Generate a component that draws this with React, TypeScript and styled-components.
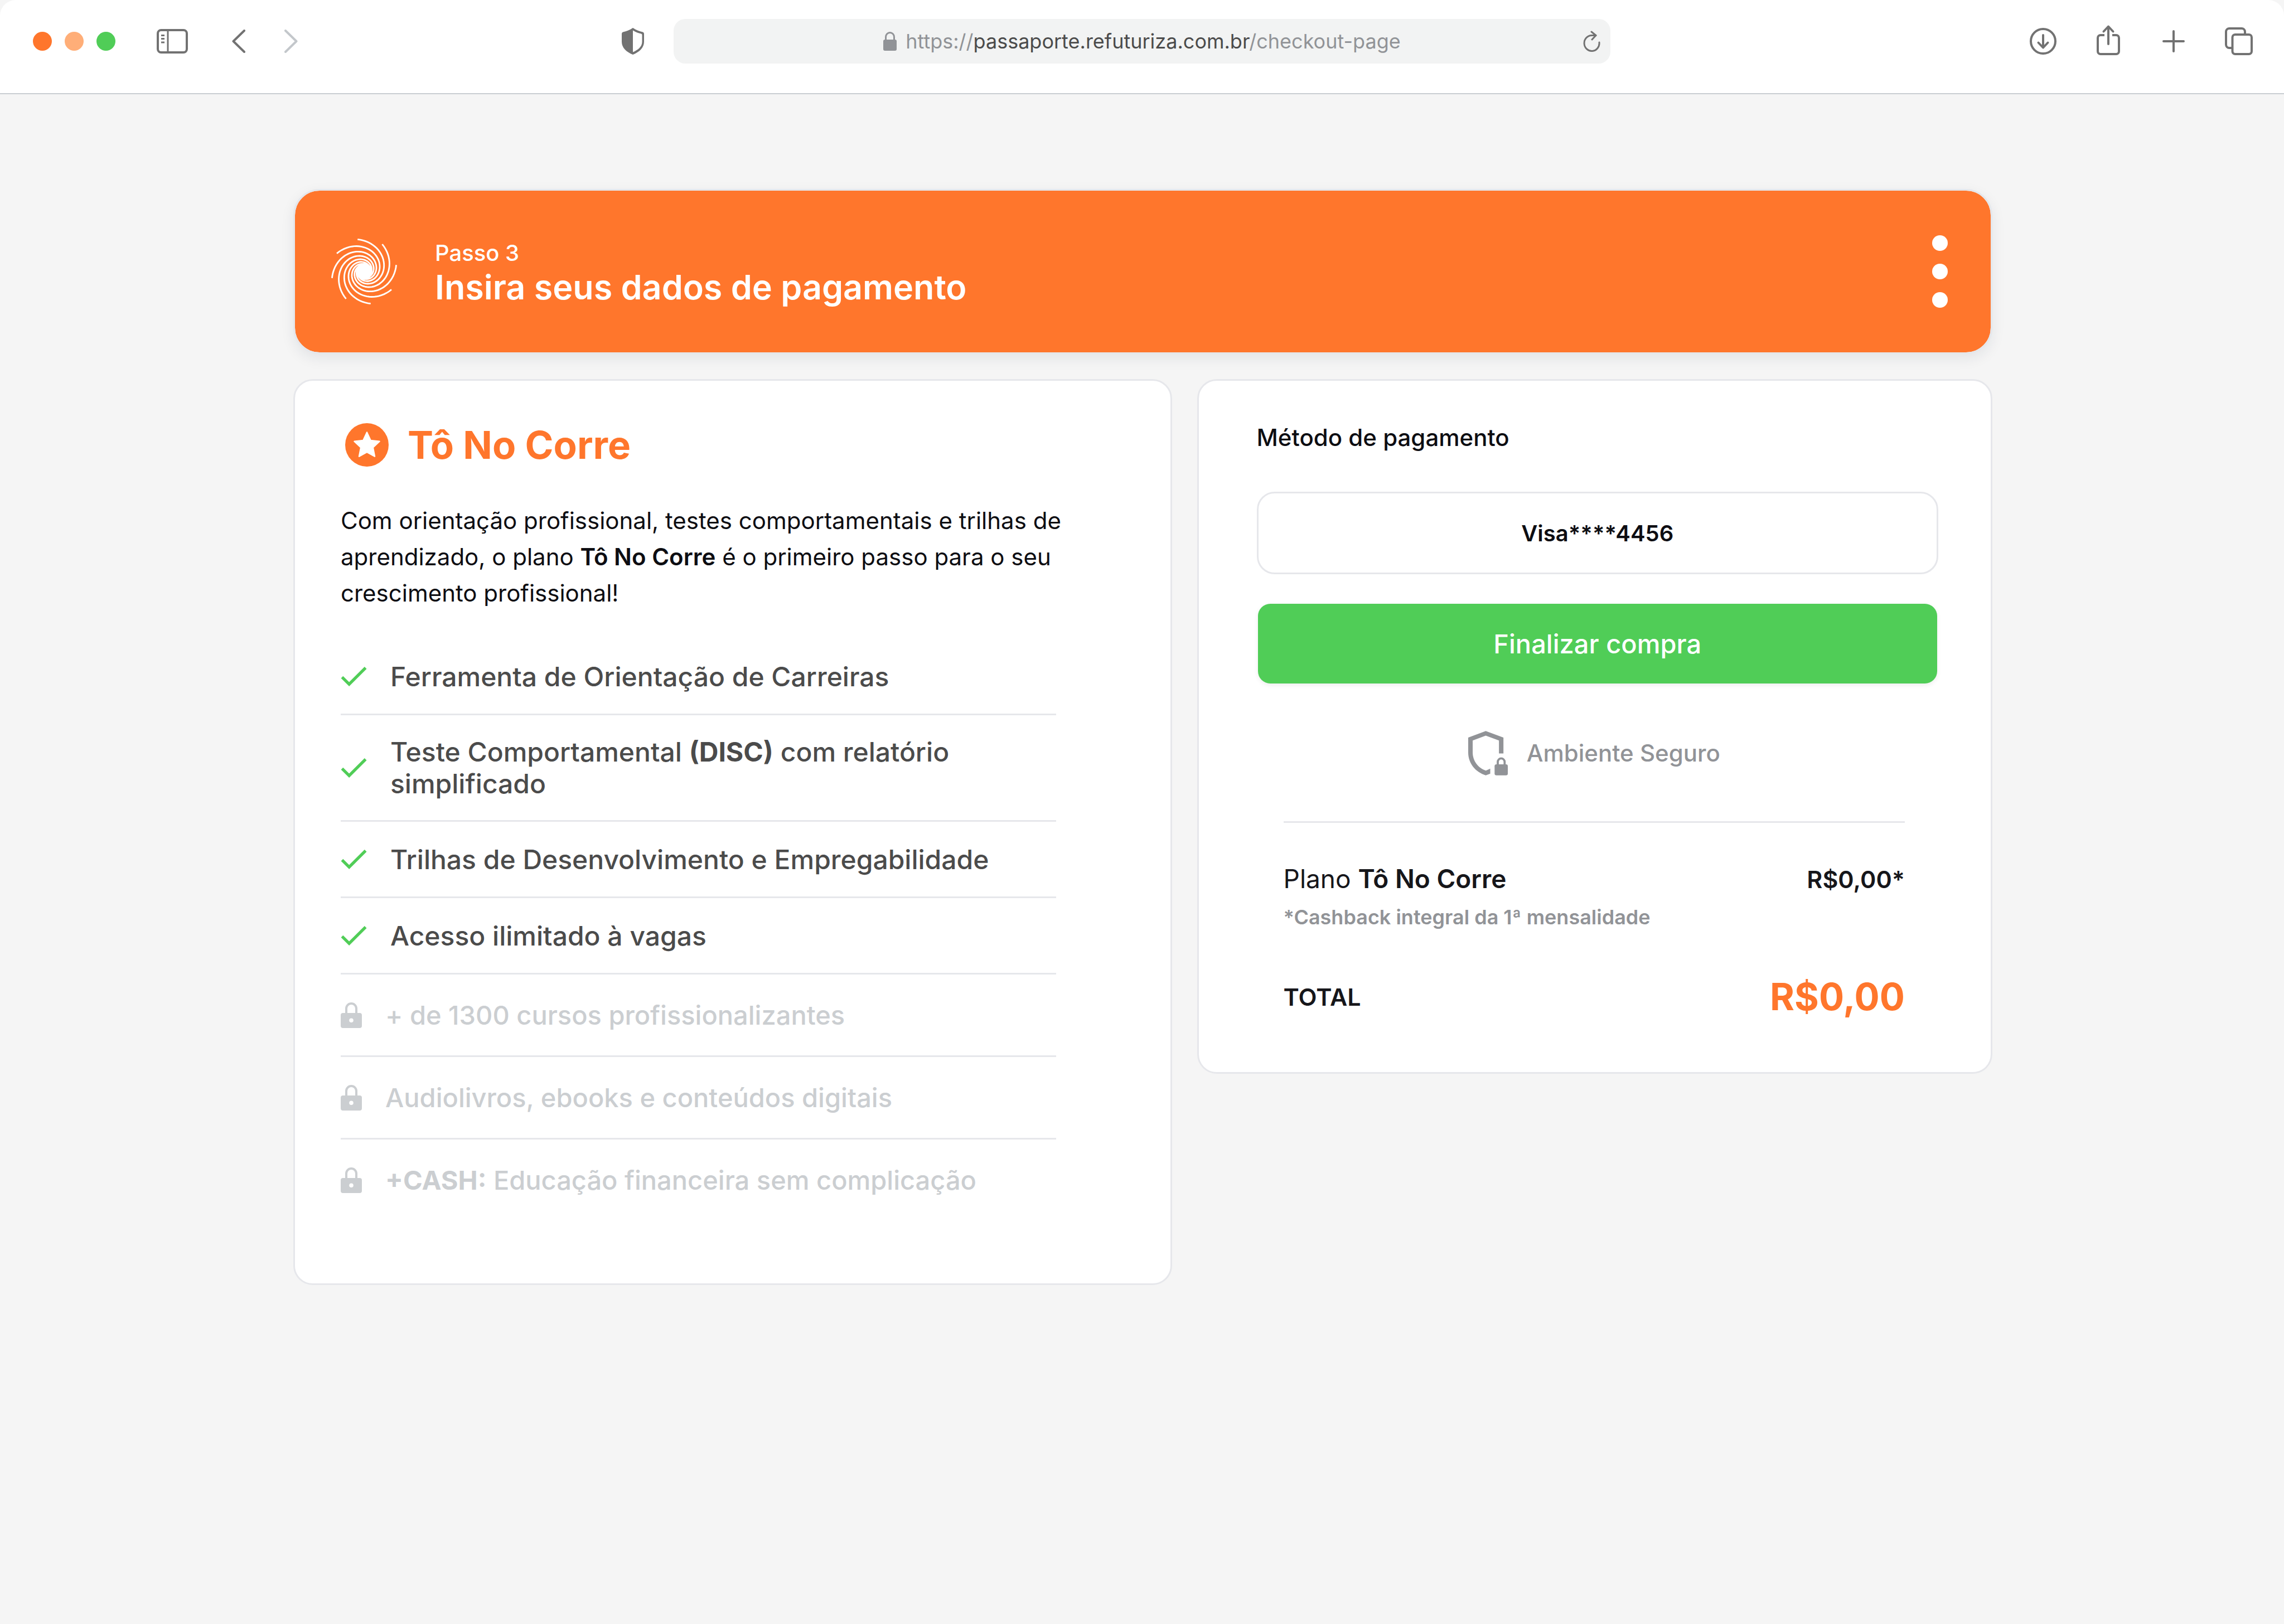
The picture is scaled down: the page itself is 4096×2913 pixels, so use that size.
import React from "react";
import styled, { createGlobalStyle } from "styled-components";

const color = {
  page: "#f5f5f5",
  surface: "#ffffff",
  line: "#e6e7eb",
  orange: "#ff762c",
  peach: "#ffae78",
  green: "#50cd57",
  ink: "#0d0d12",
  body: "#4b4b4b",
  chrome: "#727272",
  muted: "#919397",
  disabled: "#cbced1",
};

const GlobalStyle = createGlobalStyle`
  *, *::before, *::after { box-sizing: border-box; }
  html, body, #root { min-height: 100vh; }
  body {
    margin: 0;
    background: ${color.page};
    color: ${color.ink};
    font-family: Inter, "Open Sans", sans-serif;
  }
  button, input { font: inherit; }
  svg { display: block; flex: none; }
  h1, h2, p, ul, dl, dt, dd { margin: 0; padding: 0; }
`;

/* ---------- browser bar ---------- */

const Toolbar = styled.header`
  display: grid;
  grid-template-columns: minmax(0, 1fr) 41% minmax(0, 1fr);
  align-items: center;
  padding: 34px 0 53px;
  background: ${color.surface};
  border-bottom: 2px solid #c9ced2;
  border-radius: 28px 28px 0 0;
  color: ${color.chrome};
`;

const ToolbarStart = styled.div`
  display: flex;
  align-items: center;
  padding: 0 53px 0 59px;
`;

const ToolbarEnd = styled.div`
  display: flex;
  align-items: center;
  justify-content: flex-end;
  gap: 65px;
  padding-right: 55px;
`;

const WindowControls = styled.div`
  display: flex;
  gap: 23px;
  margin-right: 74px;
`;

const WindowDot = styled.button<{ $fill: string }>`
  width: 34px;
  height: 34px;
  padding: 0;
  border: 0;
  border-radius: 50%;
  background: ${(p) => p.$fill};
`;

const IconButton = styled.button`
  padding: 0;
  border: 0;
  background: none;
  color: inherit;
  &:disabled { color: #c3c7cb; }
`;

const History = styled.nav`
  display: flex;
  gap: 70px;
  margin: 0 auto 0 79px;
`;

const AddressBar = styled.div`
  height: 80px;
  display: grid;
  grid-template-columns: 1fr auto 1fr;
  align-items: center;
  padding: 0 17px;
  border-radius: 21px;
  background: #f2f3f3;
`;

const Address = styled.div`
  grid-column: 2;
  display: flex;
  align-items: center;
  gap: 16px;
  font-size: 36px;
  line-height: 48px;
  color: ${color.muted};
`;

const Host = styled.span`
  color: ${color.body};
`;

const ReloadSlot = styled.div`
  display: flex;
  justify-content: flex-end;
`;

/* ---------- page ---------- */

const Page = styled.main`
  display: flex;
  flex-direction: column;
  gap: 45px;
  padding: 170px 523px 170px 526px;
`;

const Banner = styled.section`
  display: flex;
  align-items: center;
  min-height: 296px;
  padding: 0 77px 0 65px;
  border: 3px solid #e5e7eb;
  border-radius: 47px;
  background: ${color.orange};
  background-clip: padding-box;
  color: ${color.surface};
  box-shadow: 0 8px 24px rgba(30, 40, 70, 0.08);
`;

const BannerText = styled.div`
  flex: 1;
  padding-left: 68px;
`;

const Step = styled.p`
  font-size: 40px;
  line-height: 56px;
  font-weight: 500;
`;

const BannerTitle = styled.h1`
  font-size: 61px;
  line-height: 66px;
  font-weight: 600;
`;

const MenuButton = styled(IconButton)`
  display: flex;
  flex-direction: column;
  gap: 23px;
`;

const MenuDot = styled.span`
  width: 28px;
  height: 28px;
  border-radius: 50%;
  background: ${color.surface};
`;

const Columns = styled.div`
  display: grid;
  grid-template-columns: 1575fr 1426fr;
  align-items: start;
  gap: 45px;
`;

const Card = styled.section`
  border: 3px solid ${color.line};
  border-radius: 35px;
  background: ${color.surface};
`;

const PlanCard = styled(Card)`
  padding: 76px 150px 110px 82px;
`;

const PlanHeader = styled.div`
  display: flex;
  align-items: center;
  gap: 34px;
  padding-left: 8px;
`;

const PlanName = styled.h2`
  font-size: 69px;
  line-height: 78px;
  font-weight: 700;
  color: ${color.orange};
`;

const PlanText = styled.p`
  margin-top: 64px;
  font-size: 42px;
  line-height: 65px;
`;

const Strong = styled.strong`
  font-weight: 600;
`;

const Heavy = styled.strong`
  font-weight: 700;
`;

const Features = styled.ul`
  margin: 50px 55px 0 0;
  list-style: none;
`;

const Feature = styled.li<{ $locked?: boolean }>`
  display: flex;
  align-items: center;
  gap: 42px;
  min-height: ${(p) => (p.$locked ? 148 : 137)}px;
  padding: 37px 0;
  border-bottom: 3px solid ${color.line};
  font-size: ${(p) => (p.$locked ? 47 : 48)}px;
  line-height: 57px;
  font-weight: 500;
  color: ${(p) => (p.$locked ? color.disabled : color.body)};
  &:last-child { border-bottom-color: transparent; }
`;

const PaymentCard = styled(Card)`
  padding: 72px 94px 95px 104px;
`;

const FieldLabel = styled.label`
  display: block;
  font-size: 42px;
  line-height: 60px;
  font-weight: 500;
`;

const CardField = styled.input`
  display: block;
  width: 100%;
  height: 148px;
  margin-top: 67px;
  border: 3px solid ${color.line};
  border-radius: 32px;
  background: ${color.surface};
  color: inherit;
  font-size: 40px;
  font-weight: 600;
  text-align: center;
`;

const SubmitSlot = styled.div`
  display: flex;
  padding: 53px 2px 0;
`;

const SubmitButton = styled.button`
  flex: 1;
  height: 143px;
  border: 0;
  border-radius: 22px;
  background: ${color.green};
  color: ${color.surface};
  font-size: 47px;
  font-weight: 500;
  box-shadow: 0 3px 8px rgba(0, 0, 0, 0.07);
`;

const Secure = styled.p`
  display: flex;
  align-items: center;
  justify-content: center;
  gap: 34px;
  margin-top: 85px;
  padding-right: 12px;
  font-size: 42px;
  line-height: 80px;
  font-weight: 500;
  color: ${color.muted};
`;

const Summary = styled.dl`
  margin: 82px 60px 0 48px;
  padding-top: 70px;
  border-top: 3px solid ${color.line};
  color: #16161a;
`;

const SummaryRow = styled.div`
  display: flex;
  justify-content: space-between;
  align-items: baseline;
  line-height: 60px;
`;

const PlanTerm = styled.dt`
  font-size: 46px;
`;

const Price = styled.dd`
  font-size: 43px;
  font-weight: 600;
`;

const Note = styled.p`
  margin-top: 13px;
  font-size: 36px;
  line-height: 50px;
  font-weight: 600;
  color: ${color.muted};
`;

const TotalRow = styled.div`
  display: flex;
  justify-content: space-between;
  align-items: center;
  margin-top: 78px;
  line-height: 80px;
`;

const TotalTerm = styled.dt`
  font-size: 43px;
  font-weight: 600;
`;

const TotalPrice = styled.dd`
  font-size: 67px;
  font-weight: 700;
  color: ${color.orange};
`;

/* ---------- drawings ---------- */

const stroke = {
  fill: "none",
  stroke: "currentColor",
  strokeWidth: 4,
  strokeLinecap: "round" as const,
  strokeLinejoin: "round" as const,
};

const SidebarIcon = () => (
  <svg width="56" height="44" viewBox="0 0 56 44" {...stroke}>
    <rect x="2" y="2" width="52" height="40" rx="6" />
    <path d="M20 2V42" strokeWidth="3" />
    <path d="M8 11.5H14M8 17.5H14M8 24H14" strokeWidth="3" strokeLinecap="butt" />
  </svg>
);

const BackIcon = () => (
  <svg width="24" height="42" viewBox="0 0 24 42" {...stroke}>
    <path d="M22 2 2.500 21 22 40" />
  </svg>
);

const ForwardIcon = () => (
  <svg width="24" height="42" viewBox="0 0 24 42" {...stroke}>
    <path d="M2 2 21.500 21 2 40" />
  </svg>
);

const PrivacyIcon = () => (
  <svg width="40" height="48" viewBox="0 0 40 48" fill="currentColor">
    <path
      fillRule="evenodd"
      d="M20 0C26 4 32 6.500 37 7.200Q40 7.700 40 11V25C40 36 31 43.500 20 48C9 43.500 0 36 0 25V11Q0 7.700 3 7.200C8 6.500 14 4 20 0ZM20 4.500V43.500C29.500 39.500 36.500 33.500 36.500 25V12.500Q36.500 10.800 34.800 10.500C29.500 9.500 24.500 7.500 20 4.500Z"
    />
  </svg>
);

const AddressLock = () => (
  <svg width="24" height="34" viewBox="0 0 24 34">
    <rect y="14" width="24" height="20" rx="3" fill="currentColor" />
    <path d="M4.500 15V9.500a7.500 8 0 0 1 15 0V15" fill="none" stroke="currentColor" strokeWidth="3" />
  </svg>
);

const ReloadIcon = () => (
  <svg width="32" height="38" viewBox="0 0 32 38" {...stroke} strokeWidth="3">
    <path d="M29 21A13.500 14 0 1 1 15.500 8.500H23" />
    <path d="M15 2 23 8.500 16 16" />
  </svg>
);

const DownloadIcon = () => (
  <svg width="52" height="60" viewBox="0 0 52 60" {...stroke}>
    <circle cx="26" cy="30" r="22" />
    <path d="M26 19V41M17.500 32.500 26 41.500 34.500 32.500" />
  </svg>
);

const ShareIcon = () => (
  <svg width="52" height="60" viewBox="0 0 52 60" {...stroke}>
    <path strokeLinecap="butt" d="M19 19H12a5 5 0 0 0-5 5V48a5 5 0 0 0 5 5H40a5 5 0 0 0 5-5V24a5 5 0 0 0-5-5H33" />
    <path d="M26 4V35M17.500 12.500 26 3.500 34.500 12.500" />
  </svg>
);

const PlusIcon = () => (
  <svg width="52" height="60" viewBox="0 0 52 60" {...stroke}>
    <path d="M26 12V48M8 30H44" />
  </svg>
);

const TabsIcon = () => (
  <svg width="52" height="60" viewBox="0 0 52 60" {...stroke}>
    <path strokeLinecap="butt" d="M14.500 42H9a6 6 0 0 1-6-6V13a6 6 0 0 1 6-6H31a6 6 0 0 1 6 6V18" />
    <rect x="14.500" y="18" width="34.500" height="35" rx="5" />
  </svg>
);

/* One arm of the brand mark: a logarithmic spiral winding in towards the centre. */
const spiralArm = (startDeg: number) => {
  const points: string[] = [];
  for (let turn = 0; turn <= 280; turn += 5) {
    const r = 82.7 * Math.exp((-0.308 * turn * Math.PI) / 180);
    const a = ((startDeg + turn) * Math.PI) / 180;
    points.push(`${(r * Math.cos(a)).toFixed(2)} ${(r * Math.sin(a)).toFixed(2)}`);
  }
  return `M${points.join("L")}`;
};

const BrandMark = () => (
  <svg width="118" height="118" viewBox="-83 -83 166 166" fill="none" stroke="currentColor" strokeWidth="4">
    {[0, 1, 2, 3, 4, 5, 6, 7].map((i) => (
      <path key={i} d={spiralArm(-101.5 + i * 45)} />
    ))}
    <circle r="21" fill="currentColor" stroke="none" />
  </svg>
);

const StarBadge = () => (
  <svg width="78" height="78" viewBox="0 0 100 100">
    <circle cx="50" cy="50" r="50" fill={color.orange} />
    <path
      d="M50 21 58.500 39.500 79 42 64 56 68 76.500 50 66.500 32 76.500 36 56 21 42 41.500 39.500Z"
      fill="#fff"
      stroke="#fff"
      strokeWidth="3"
      strokeLinejoin="round"
    />
  </svg>
);

const CheckIcon = () => (
  <svg width="47" height="35" viewBox="3.400 5.600 17.600 13.400" fill={color.green}>
    <path d="M9 16.170 4.830 12l-1.420 1.410L9 19 21 7l-1.410-1.410z" />
  </svg>
);

const LockIcon = () => (
  <svg width="38" height="46" viewBox="0 0 38 46">
    <path
      fill="currentColor"
      fillRule="evenodd"
      d="M4 19H34a4 4 0 0 1 4 4V42a4 4 0 0 1-4 4H4a4 4 0 0 1-4-4V23a4 4 0 0 1 4-4ZM19 28.500a3.800 3.800 0 1 0 0 7.600a3.800 3.800 0 1 0 0-7.600Z"
    />
    <path d="M10 20V11a9 9 0 0 1 18 0V20" fill="none" stroke="currentColor" strokeWidth="4" />
  </svg>
);

const SecureIcon = () => (
  <svg width="71" height="80" viewBox="42 42 300 336" fill="currentColor">
    <path d="M175 42 309 92V212H275V114L175 77 76 114V205C76 270 120 325 176 342L209 327V365L175 378C100 355 42 290 42 205V92Z" />
    <rect x="242" y="294" width="100" height="84" rx="14" />
    <path d="M266 296V276a26 26 0 0 1 52 0V296" fill="none" stroke="currentColor" strokeWidth="16" />
  </svg>
);

/* ---------- content ---------- */

const features: { text: React.ReactNode; locked?: boolean }[] = [
  { text: "Ferramenta de Orientação de Carreiras" },
  { text: <>Teste Comportamental <Heavy>(DISC)</Heavy> com relatório simplificado</> },
  { text: "Trilhas de Desenvolvimento e Empregabilidade" },
  { text: "Acesso ilimitado à vagas" },
  { text: "+ de 1300 cursos profissionalizantes", locked: true },
  { text: "Audiolivros, ebooks e conteúdos digitais", locked: true },
  { text: <><Heavy>+CASH:</Heavy> Educação financeira sem complicação</>, locked: true },
];

export default function App() {
  return (
    <>
      <GlobalStyle />
      <Toolbar>
        <ToolbarStart>
          <WindowControls>
            <WindowDot $fill={color.orange} aria-label="Fechar" />
            <WindowDot $fill={color.peach} aria-label="Minimizar" />
            <WindowDot $fill={color.green} aria-label="Maximizar" />
          </WindowControls>
          <IconButton aria-label="Barra lateral"><SidebarIcon /></IconButton>
          <History>
            <IconButton aria-label="Voltar"><BackIcon /></IconButton>
            <IconButton aria-label="Avançar" disabled><ForwardIcon /></IconButton>
          </History>
          <IconButton aria-label="Privacidade"><PrivacyIcon /></IconButton>
        </ToolbarStart>
        <AddressBar>
          <Address>
            <AddressLock />
            <span>https://<Host>passaporte.refuturiza.com.br</Host>/checkout-page</span>
          </Address>
          <ReloadSlot>
            <IconButton aria-label="Recarregar"><ReloadIcon /></IconButton>
          </ReloadSlot>
        </AddressBar>
        <ToolbarEnd>
          <IconButton aria-label="Downloads"><DownloadIcon /></IconButton>
          <IconButton aria-label="Compartilhar"><ShareIcon /></IconButton>
          <IconButton aria-label="Nova aba"><PlusIcon /></IconButton>
          <IconButton aria-label="Abas"><TabsIcon /></IconButton>
        </ToolbarEnd>
      </Toolbar>

      <Page>
        <Banner>
          <BrandMark />
          <BannerText>
            <Step>Passo 3</Step>
            <BannerTitle>Insira seus dados de pagamento</BannerTitle>
          </BannerText>
          <MenuButton aria-label="Mais opções">
            <MenuDot />
            <MenuDot />
            <MenuDot />
          </MenuButton>
        </Banner>

        <Columns>
          <PlanCard>
            <PlanHeader>
              <StarBadge />
              <PlanName>Tô No Corre</PlanName>
            </PlanHeader>
            <PlanText>
              Com orientação profissional, testes comportamentais e trilhas de
              aprendizado, o plano <Strong>Tô No Corre</Strong> é o primeiro passo para o seu
              crescimento profissional!
            </PlanText>
            <Features>
              {features.map((feature, i) => (
                <Feature key={i} $locked={feature.locked}>
                  {feature.locked ? <LockIcon /> : <CheckIcon />}
                  <span>{feature.text}</span>
                </Feature>
              ))}
            </Features>
          </PlanCard>

          <PaymentCard>
            <FieldLabel htmlFor="card">Método de pagamento</FieldLabel>
            <CardField id="card" readOnly value="Visa****4456" />
            <SubmitSlot>
              <SubmitButton type="submit">Finalizar compra</SubmitButton>
            </SubmitSlot>
            <Secure>
              <SecureIcon />
              Ambiente Seguro
            </Secure>
            <Summary>
              <SummaryRow>
                <PlanTerm>Plano <Strong>Tô No Corre</Strong></PlanTerm>
                <Price>R$0,00*</Price>
              </SummaryRow>
              <Note>*Cashback integral da 1ª mensalidade</Note>
              <TotalRow>
                <TotalTerm>TOTAL</TotalTerm>
                <TotalPrice>R$0,00</TotalPrice>
              </TotalRow>
            </Summary>
          </PaymentCard>
        </Columns>
      </Page>
    </>
  );
}
